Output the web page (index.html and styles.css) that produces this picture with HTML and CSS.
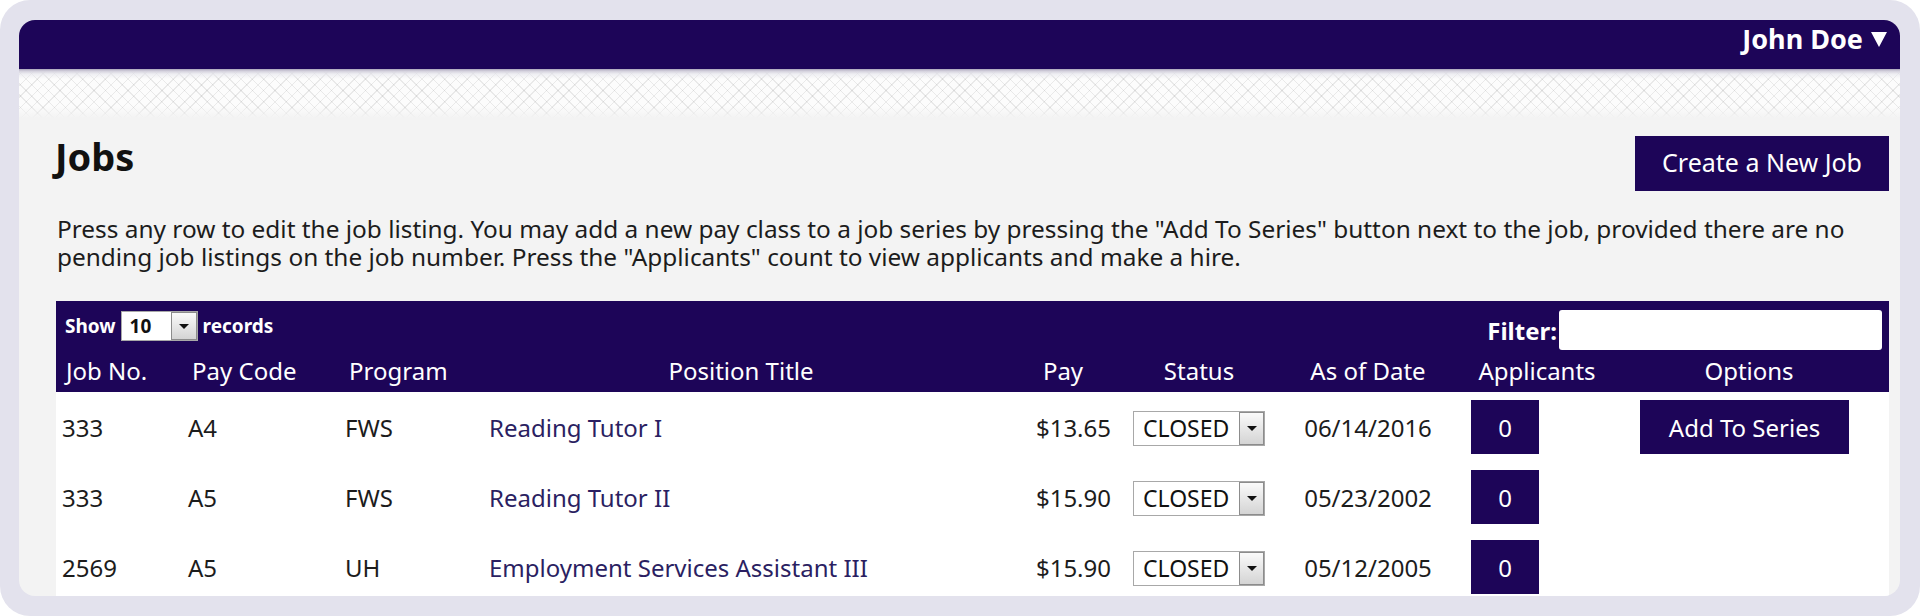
FILE: index.html
```html
<!DOCTYPE html>
<html lang="en">
<head>
<meta charset="utf-8">
<title>Jobs</title>
<link rel="stylesheet" href="styles.css">
</head>
<body>
<div class="frame">
  <div class="card">
    <header class="topbar">
      <span class="user">John Doe
        <svg class="caret" width="16" height="15" viewBox="0 0 16 15"><polygon points="0,0 16,0 8,15" fill="#fff"/></svg>
      </span>
    </header>
    <div class="weave"></div>
    <main class="content">
      <div class="title-row">
        <h1 class="title">Jobs</h1>
        <button class="btn btn-create">Create a New Job</button>
      </div>
      <p class="intro">Press any row to edit the job listing. You may add a new pay class to a job series by pressing the "Add To Series" button next to the job, provided there are no pending job listings on the job number. Press the "Applicants" count to view applicants and make a hire.</p>
      <div class="grid">
        <div class="toolbar">
          <div class="length">
            <span>Show</span>
            <span class="select select-sm"><span class="select-value">10</span><span class="select-arrow"></span></span>
            <span>records</span>
          </div>
          <label class="filter">Filter:<span class="filter-input"></span></label>
        </div>
        <table class="jobs">
          <colgroup>
            <col class="c-job"><col class="c-code"><col class="c-prog"><col class="c-title"><col class="c-pay"><col class="c-status"><col class="c-date"><col class="c-apps"><col class="c-opts">
          </colgroup>
          <thead>
            <tr>
              <th class="left">Job No.</th>
              <th class="left">Pay Code</th>
              <th class="left">Program</th>
              <th>Position Title</th>
              <th>Pay</th>
              <th>Status</th>
              <th>As of Date</th>
              <th>Applicants</th>
              <th>Options</th>
            </tr>
          </thead>
          <tbody>
            <tr>
              <td>333</td><td>A4</td><td>FWS</td>
              <td class="link">Reading Tutor I</td>
              <td class="pay">$13.65</td>
              <td class="center"><span class="select select-status"><span class="select-value">CLOSED</span><span class="select-arrow"></span></span></td>
              <td class="center">06/14/2016</td>
              <td><span class="btn btn-count">0</span></td>
              <td class="center"><span class="btn btn-series">Add To Series</span></td>
            </tr>
            <tr>
              <td>333</td><td>A5</td><td>FWS</td>
              <td class="link">Reading Tutor II</td>
              <td class="pay">$15.90</td>
              <td class="center"><span class="select select-status"><span class="select-value">CLOSED</span><span class="select-arrow"></span></span></td>
              <td class="center">05/23/2002</td>
              <td><span class="btn btn-count">0</span></td>
              <td></td>
            </tr>
            <tr>
              <td>2569</td><td>A5</td><td>UH</td>
              <td class="link">Employment Services Assistant III</td>
              <td class="pay">$15.90</td>
              <td class="center"><span class="select select-status"><span class="select-value">CLOSED</span><span class="select-arrow"></span></span></td>
              <td class="center">05/12/2005</td>
              <td><span class="btn btn-count">0</span></td>
              <td></td>
            </tr>
          </tbody>
        </table>
      </div>
    </main>
  </div>
</div>
</body>
</html>
```
FILE: styles.css
```css
* { box-sizing: border-box; }
html, body { margin: 0; padding: 0; }
body {
  background: #ffffff;
  font-family: "Noto Sans", "Open Sans", "DejaVu Sans", sans-serif;
  color: #1c1c1c;
  width: 1920px;
  height: 616px;
  overflow: hidden;
}
.frame {
  width: 1920px;
  height: 616px;
  background: #e3e2ed;
  border-radius: 30px;
  padding: 20px 20px 0 19px;
}
.card {
  width: 1881px;
  height: 576px;
  border-radius: 16px;
  overflow: hidden;
  background: #f3f3f3;
  display: flex;
  flex-direction: column;
}
.topbar {
  flex: 0 0 49px;
  height: 49px;
  background: #1d0558;
  display: flex;
  justify-content: flex-end;
  align-items: flex-start;
  padding: 0 13px 0 0;
}
.user {
  color: #fff;
  font-weight: 700;
  font-size: 27px;
  line-height: 37px;
  display: flex;
  align-items: center;
  gap: 8px;
}
.caret { margin-top: 2px; }
.weave {
  flex: 0 0 49px;
  height: 49px;
  background-color: #fcfcfc;
  background-image:
    linear-gradient(to bottom, #a9a4b9 0, #d3d0dc 2px, rgba(232,232,238,0.7) 5px, rgba(255,255,255,0) 10px),
    linear-gradient(to bottom, rgba(243,243,243,0) 75%, #f3f3f3 100%),
    repeating-linear-gradient(45deg, rgba(0,0,0,0.075) 0 1px, transparent 1px 8px),
    repeating-linear-gradient(-45deg, rgba(0,0,0,0.075) 0 1px, transparent 1px 8px);
}
.content {
  flex: 0 0 auto;
  padding: 18px 11px 0 37px;
}
.title-row {
  display: flex;
  justify-content: space-between;
  align-items: flex-start;
}
.title {
  margin: -2px 0 0 -1px;
  font-size: 38px;
  font-weight: 700;
  line-height: 44px;
  color: #111;
}
.btn {
  background: #1d0558;
  color: #fff;
  border: 0;
  font-family: inherit;
  display: inline-flex;
  align-items: center;
  justify-content: center;
}
.btn-create {
  width: 254px;
  height: 55px;
  font-size: 25px;
  padding: 0 0 3px;
}
.intro {
  margin: 24px 0 0 1px;
  font-size: 24.4px;
  line-height: 28px;
  color: #1c1c1c;
}
.grid {
  margin-top: 30px;
  width: 1833px;
  background: #fff;
}
.toolbar {
  height: 51px;
  background: #1d0558;
  display: flex;
  justify-content: space-between;
  align-items: center;
  padding: 0 7px 0 9px;
  color: #fff;
  font-weight: 700;
}
.length {
  display: flex;
  align-items: center;
  gap: 5px;
  font-size: 19px;
  padding-bottom: 2px;
}
.filter {
  display: flex;
  align-items: center;
  font-size: 24px;
  align-self: flex-end;
  padding-bottom: 2px;
}
.filter-input {
  width: 323px;
  height: 40px;
  background: #fff;
  border-radius: 3px;
  margin-left: 2px;
}
.select {
  display: inline-flex;
  align-items: stretch;
  background: #fff;
  border: 1px solid #a8a8a8;
  color: #111;
}
.select-value {
  flex: 1;
  display: flex;
  align-items: center;
  text-align: left;
}
.select-arrow {
  position: relative;
  border: 1px solid #8c8c8c;
  background: linear-gradient(to bottom, #fafafa, #d4d4d4);
}
.select-arrow::after {
  content: "";
  position: absolute;
  left: 50%;
  top: 50%;
  margin: -2px 0 0 -5px;
  border-left: 5px solid transparent;
  border-right: 5px solid transparent;
  border-top: 5px solid #111;
}
.select-sm {
  width: 77px;
  height: 30px;
  font-size: 19px;
  font-weight: 700;
}
.select-sm .select-value { padding-left: 8px; }
.select-sm .select-arrow { width: 26px; }
.select-status {
  width: 132px;
  height: 35px;
  font-size: 23px;
  vertical-align: middle;
}
.select-status .select-value { padding-left: 9px; }
.select-status .select-arrow { width: 25px; }
.jobs {
  width: 1833px;
  border-collapse: collapse;
  table-layout: fixed;
}
.c-job { width: 126px; }
.c-code { width: 157px; }
.c-prog { width: 144px; }
.c-title { width: 516px; }
.c-pay { width: 128px; }
.c-status { width: 144px; }
.c-date { width: 194px; }
.c-apps { width: 144px; }
.c-opts { width: 280px; }
.jobs thead th {
  background: #1d0558;
  color: #fff;
  font-weight: 400;
  font-size: 24px;
  height: 40px;
  padding: 0 0 4px;
  text-align: center;
  white-space: nowrap;
}
.jobs thead th.left {
  text-align: left;
  padding-left: 10px;
}
.jobs td {
  height: 70px;
  font-size: 24px;
  padding: 0 0 0 6px;
  vertical-align: middle;
  white-space: nowrap;
  color: #1c1c1c;
}
.jobs td.link { color: #2b1f62; }
.jobs td.pay {
  text-align: right;
  padding: 0 16px 0 0;
}
.jobs td.center {
  text-align: center;
  padding: 0;
}
.btn-count {
  width: 68px;
  height: 54px;
  font-size: 24px;
  vertical-align: middle;
}
.btn-series {
  width: 209px;
  height: 54px;
  font-size: 24px;
  margin-left: -9px;
  vertical-align: middle;
}
```
